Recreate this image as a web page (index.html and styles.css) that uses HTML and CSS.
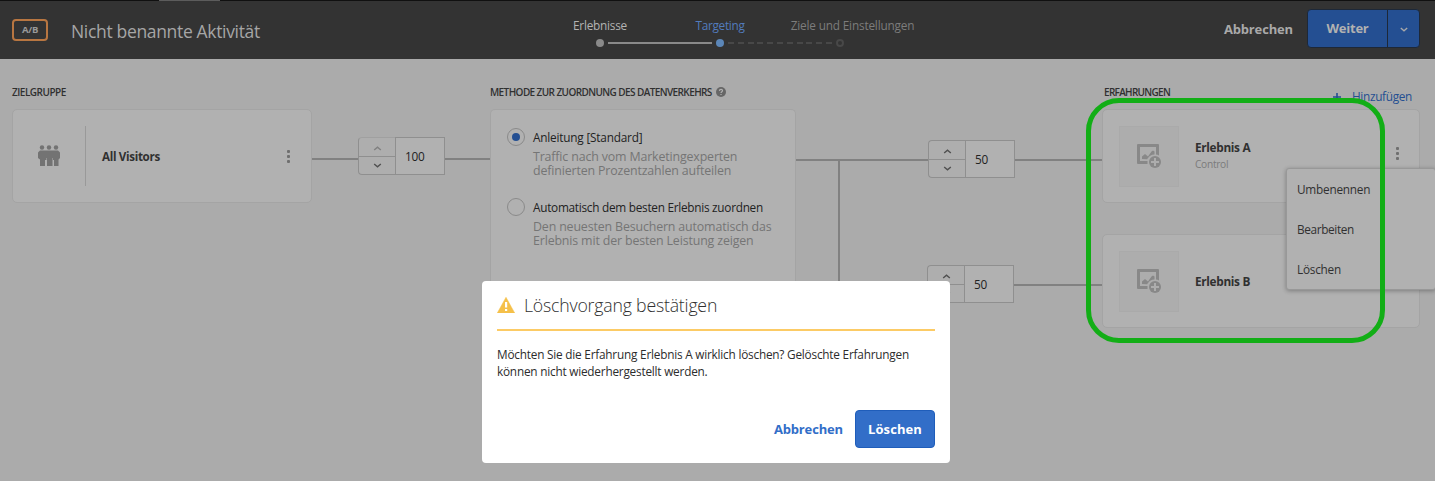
FILE: index.html
```
<!DOCTYPE html>
<html lang="de">
<head>
<meta charset="utf-8">
<title>Nicht benannte Aktivität</title>
<link rel="stylesheet" href="styles.css">
</head>
<body>
<svg class="defs" width="0" height="0">
  <symbol id="up" viewBox="0 0 10 6"><path d="M1 4.800 5 1.400 9 4.800" fill="none" stroke="currentColor" stroke-width="1.700"/></symbol>
  <symbol id="down" viewBox="0 0 10 6"><path d="M1 1.200 5 4.600 9 1.200" fill="none" stroke="currentColor" stroke-width="1.700"/></symbol>
  <symbol id="image-add" viewBox="0 0 24 24">
    <path fill="currentColor" fill-rule="evenodd" d="M1 0h20a1 1 0 0 1 1 1v10.500a7 7 0 0 0-3-1V3H3v14h7.500v3H1a1 1 0 0 1-1-1V1a1 1 0 0 1 1-1z"/>
    <path fill="currentColor" d="M5 15v-2.500L8 10l3 2.500 3.500-5L16 6.500l1.500 1V10.500A7.500 7.500 0 0 0 11 14l-1 1.200z"/>
    <circle cx="18" cy="18" r="6" fill="currentColor"/>
    <path d="M18 14v8M14 18h8" stroke="#adadad" stroke-width="2"/>
  </symbol>
</svg>
<div class="strip"><span class="strip-tab"></span></div>
<header class="header">
  <span class="badge">A/B</span>
  <h1 class="title">Nicht benannte Aktivität</h1>
  <ol class="steps">
    <li class="step done"><span>Erlebnisse</span><i class="dot"></i></li>
    <li class="step current"><span>Targeting</span><i class="dot"></i></li>
    <li class="step next"><span>Ziele und Einstellungen</span><i class="dot"></i></li>
  </ol>
  <div class="actions">
    <span class="cancel">Abbrechen</span>
    <div class="split"><span class="split-main">Weiter</span><span class="split-more"><svg width="8" height="5"><use href="#down"/></svg></span></div>
  </div>
</header>
<main class="flow">
  <section class="col audience">
    <h2 class="label zg">Zielgruppe</h2>
    <div class="card">
      <div class="people"><svg width="22" height="21" viewBox="0 0 22 21" fill="#737373"><circle cx="4" cy="2.500" r="2.200"/><circle cx="11" cy="2.500" r="2.200"/><circle cx="18" cy="2.500" r="2.200"/><path d="M2 5.500h18l2 2V13l-1.500 1.500V21h-4.500v-6h-1v-2h-.5v8H9v-8h-.5v2h-1.500v6H2v-6.500L0 13V7.500z"/></svg></div>
      <div class="name">All Visitors</div>
      <div class="more"><i></i><i></i><i></i></div>
    </div>
  </section>
  <div class="link first">
    <i class="line a"></i>
    <div class="stepper"><div class="arrows"><span class="off"><svg width="9" height="5"><use href="#up"/></svg></span><span><svg width="9" height="5"><use href="#down"/></svg></span></div><div class="value">100</div></div>
    <i class="line b"></i>
  </div>
  <section class="col method">
    <h2 class="label">Methode zur Zuordnung des Datenverkehrs<svg class="help" width="10" height="10" viewBox="0 0 10 10"><circle cx="5" cy="5" r="5" fill="#666"/><path d="M3.400 3.900C3.500 1.700 6.700 1.900 6.500 3.800 6.400 4.700 5 4.700 5 5.900M5 6.900v1.200" fill="none" stroke="#b1b1b1" stroke-width="1.200"/></svg></h2>
    <div class="card options">
      <div class="option"><i class="radio on"></i><div><div class="opt-title std">Anleitung [Standard]</div><div class="opt-text">Traffic nach vom Marketingexperten<br>definierten Prozentzahlen aufteilen</div></div></div>
      <div class="option"><i class="radio"></i><div><div class="opt-title">Automatisch dem besten Erlebnis zuordnen</div><div class="opt-text">Den neuesten Besuchern automatisch das<br>Erlebnis mit der besten Leistung zeigen</div></div></div>
    </div>
  </section>
  <div class="branches">
    <div class="link">
      <i class="line a"></i>
      <div class="stepper"><div class="arrows"><span><svg width="9" height="5"><use href="#up"/></svg></span><span><svg width="9" height="5"><use href="#down"/></svg></span></div><div class="value">50</div></div>
      <i class="line b"></i>
    </div>
    <div class="link second">
      <i class="line a"></i>
      <div class="stepper"><div class="arrows"><span><svg width="9" height="5"><use href="#up"/></svg></span><span><svg width="9" height="5"><use href="#down"/></svg></span></div><div class="value">50</div></div>
      <i class="line b"></i>
    </div>
  </div>
  <section class="col experiences">
    <div class="exp-head"><h2 class="label ef">Erfahrungen</h2><span class="add"><svg width="8" height="8" viewBox="0 0 8 8"><path d="M4 0v8M0 4h8" stroke="currentColor" stroke-width="1.600"/></svg>Hinzufügen</span></div>
    <div class="card exp">
      <div class="thumb"><svg width="24" height="24"><use href="#image-add"/></svg></div>
      <div class="exp-name control"><div>Erlebnis A</div><small>Control</small></div>
      <div class="more"><i></i><i></i><i></i></div>
    </div>
    <div class="card exp">
      <div class="thumb"><svg width="24" height="24"><use href="#image-add"/></svg></div>
      <div class="exp-name"><div>Erlebnis B</div></div>
    </div>
  </section>
</main>
<ul class="menu"><li>Umbenennen</li><li class="edit">Bearbeiten</li><li>Löschen</li></ul>
<div class="highlight"></div>
<div class="modal">
  <div class="modal-head"><svg width="18" height="16" viewBox="0 0 18 16"><path d="M9 .3 17.700 16H.3z" fill="#f5c04a" stroke="#f5c04a" stroke-width=".5" stroke-linejoin="round"/><path d="M8 5h2.200v5.500H8zM8 12h2.200v2H8z" fill="#fff"/></svg><span>Löschvorgang bestätigen</span></div>
  <p class="modal-text">Möchten Sie die Erfahrung Erlebnis A wirklich löschen? Gelöschte Erfahrungen<br>können nicht wiederhergestellt werden.</p>
  <div class="modal-actions"><span class="quiet">Abbrechen</span><span class="primary">Löschen</span></div>
</div>
</body>
</html>
```
FILE: styles.css
```
* { box-sizing: border-box; }
body {
  margin: 0; width: 1435px; height: 481px; overflow: hidden; position: relative;
  background: #ababab; color: #303030; white-space: nowrap;
  font: 11.8px/16px "Open Sans", "Noto Sans", sans-serif; letter-spacing: -.23px;
}
h1, h2, ol, ul, p { margin: 0; padding: 0; list-style: none; font-weight: 400; }
svg { display: block; }
.defs { position: absolute; }

.strip { height: 1px; background: #101010; padding-left: 159px; }
.strip-tab { display: block; width: 61px; height: 1px; background: #5c5c5c; }
.header { display: flex; height: 58px; background: #333; padding-left: 12px; }
.badge {
  width: 36px; height: 22px; margin-top: 18px; border: 2px solid #b87641; border-radius: 4px;
  color: #999; font-size: 9.5px; letter-spacing: -.3px; font-weight: 700; line-height: 18px; text-align: center;
}
.title { width: 469px; margin: 18px 0 0 23px; font-size: 17.5px; line-height: 24px; letter-spacing: -.33px; color: #a6a6a6; }
.steps { display: flex; }
.step { width: 120px; display: flex; flex-direction: column; align-items: center; padding-top: 16px; color: #b3b3b3; position: relative; }
.dot { width: 8px; height: 8px; border-radius: 50%; margin-top: 6px; background: #8a8a8a; }
.current { color: #527bbd; letter-spacing: -.3px; }
.current .dot { background: #5b86b8; }
.next { color: #7c7c7c; letter-spacing: -.18px; }
.next span { padding-left: 25px; }
.next .dot { background: none; border: 2px solid #484848; }
.done::after, .current::after { content: ""; position: absolute; left: 68px; top: 41px; width: 104px; height: 2px; background: #8a8a8a; }
.current::after { background: repeating-linear-gradient(90deg, #484848 0 6px, transparent 6px 9.800px); }
.actions { display: flex; margin-left: auto; padding: 8px 15px 0 0; font-size: 13px; font-weight: 700; color: #a9a9a9; }
.cancel { margin: 12px 14px 0 0; letter-spacing: -.15px; }
.split { display: flex; width: 113px; height: 39px; border: 1px solid #1d2838; border-radius: 4px; background: #244f92; }
.split-main { flex: 1; text-align: center; line-height: 37px; color: #b1b1b1; }
.split-more { width: 32px; border-left: 1px solid #1d2838; display: flex; align-items: center; justify-content: center; padding-top: 2px; }

.flow { display: flex; padding: 26px 0 0 12px; }
.label { height: 24px; font-size: 10px; line-height: 15px; font-weight: 600; letter-spacing: -.59px; text-transform: uppercase; color: #303030; }
.zg { letter-spacing: -.5px; }
.ef { letter-spacing: -.7px; padding-left: 2px; }
.help { display: inline-block; vertical-align: -1px; margin-left: 4px; }
.audience { width: 300px; }
.card { height: 94px; display: flex; align-items: center; border: 1px solid #a4a4a4; border-radius: 5px; background: #b1b1b1; }
.people { width: 73px; height: 60px; display: flex; align-items: center; justify-content: center; border-right: 1px solid #999; }
.people svg { margin-top: -2px; }
.name { flex: 1; padding: 2px 0 0 16px; font-size: 11.6px; font-weight: 700; letter-spacing: -.32px; }
.more { width: 3px; margin-right: 21px; display: grid; gap: 2px; padding-top: 1px; }
.more i { height: 3px; width: 3px; border-radius: 1px; background: #6f6f6f; }
.link { display: flex; height: 38px; }
.first { width: 178px; margin-top: 52px; }
.line { height: 2px; background: #818181; margin-top: 21px; }
.first .a { width: 46px; }
.b { flex: 1; }
.stepper { display: flex; width: 87px; }
.arrows { width: 37px; display: grid; grid-template-rows: 1fr 1fr; border: 1px solid #8f8f8f; border-right: 0; border-radius: 4px 0 0 4px; background: #aeaeae; color: #505050; }
.arrows span { display: flex; align-items: center; justify-content: center; padding-top: 2px; }
.arrows span + span { border-top: 1px solid #8f8f8f; padding-top: 0; }
.arrows .off { color: #808080; }
.first .arrows { border-top-color: #a0a0a0; }
.value { width: 50px; border: 1px solid #8f8f8f; background: #b1b1b1; padding-left: 9px; line-height: 37px; letter-spacing: -.3px; color: #222; }

.method { width: 306px; }
.options { height: 240px; display: block; padding: 17px 16px; border-bottom: 0; }
.option { display: flex; height: 70px; }
.radio { flex: none; width: 18px; height: 18px; border: 1px solid #8a8a8a; border-radius: 50%; margin: 1px 8px 0 0; display: flex; align-items: center; justify-content: center; }
.on::after { content: ""; width: 8px; height: 8px; border-radius: 50%; background: #244f92; }
.opt-title { line-height: 21px; color: #222; letter-spacing: -.27px; }
.std { letter-spacing: -.2px; }
.opt-text { padding-top: 2px; font-size: 12.4px; line-height: 14px; letter-spacing: -.15px; color: #757575; }

.branches { width: 306px; padding-top: 55px; background: linear-gradient(#818181, #818181) 42px 75px / 2px 125px no-repeat; }
.branches .line { margin-top: 19px; }
.branches .a { width: 132px; }
.branches .second .a { width: 89px; margin-left: 42px; }
.second { margin-top: 87px; }

.experiences { width: 318px; }
.exp-head { display: flex; justify-content: space-between; height: 24px; }
.add { display: flex; gap: 11px; align-items: center; height: 16px; margin: 3px 8px 0 0; color: #244f92; letter-spacing: -.31px; }
.add svg { margin-top: 2px; }
.exp { margin-bottom: 31px; padding-left: 16px; }
.thumb { width: 60px; height: 61px; background: #adadad; display: flex; align-items: center; justify-content: center; border: 1px solid #aaa; color: #888; }
.thumb svg { margin-top: -1px; }
.exp-name { flex: 1; padding-left: 16px; font-size: 11.8px; font-weight: 700; letter-spacing: -.32px; line-height: 17px; }
.control { padding-bottom: 1px; }
.exp-name small { display: block; font-size: 10.2px; font-weight: 400; letter-spacing: -.3px; color: #7b7b7b; }
.exp .more { margin: -6px 20px 0 0; }

.menu { position: absolute; left: 1286px; top: 168px; width: 150px; height: 122px; padding: 0 0 0 10px; background: #b1b1b1; border: 1px solid #989898; border-radius: 3px; box-shadow: 0 1px 4px rgba(0, 0, 0, .3); }
.menu li { height: 40px; line-height: 40px; }
.menu .edit { letter-spacing: -.35px; }
.highlight { position: absolute; left: 1086px; top: 98px; width: 299px; height: 245px; border: 5px solid #12ae16; border-radius: 33px; }

.modal { position: absolute; left: 482px; top: 281px; width: 468px; height: 182px; padding: 0 15px; background: #fff; border-radius: 4px; }
.modal-head { display: flex; align-items: center; gap: 9px; height: 50px; border-bottom: 2px solid #fccb65; font-size: 17.7px; font-weight: 300; letter-spacing: -.2px; color: #303030; }
.modal-text { padding-top: 15px; line-height: 17px; letter-spacing: -.215px; color: #2c2c2c; }
.modal-actions { display: flex; justify-content: flex-end; align-items: center; gap: 12px; margin-top: 30px; font-size: 13px; font-weight: 700; }
.quiet { color: #326ec8; letter-spacing: -.15px; }
.primary { width: 80px; height: 38px; line-height: 36px; text-align: center; border: 1px solid #1f5dba; border-radius: 4px; background: #326ec8; color: #fff; letter-spacing: .1px; }
```
